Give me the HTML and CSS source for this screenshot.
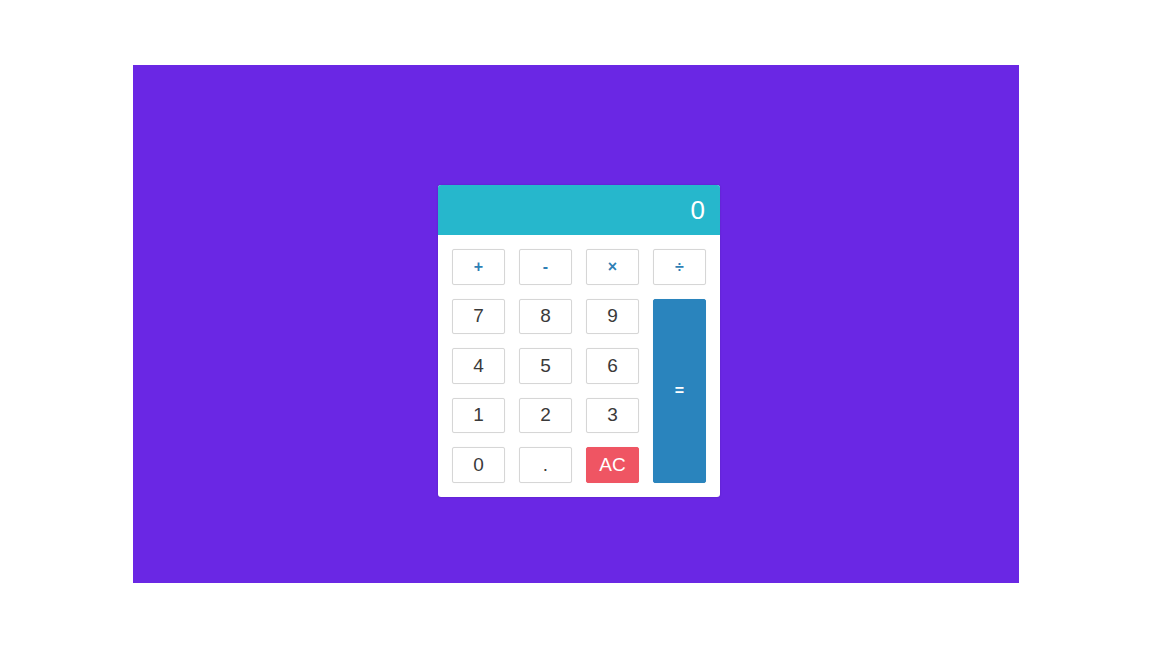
FILE: index.html
```html
<!DOCTYPE html>
<html>
<head>
<meta charset="utf-8">
<link rel="stylesheet" href="styles.css">
</head>
<body>
<div class="page">
  <div class="stage">
    <div class="calc">
      <div class="display">0</div>
      <div class="keys">
        <button class="key op">+</button>
        <button class="key op">-</button>
        <button class="key op">×</button>
        <button class="key op">÷</button>
        <button class="key">7</button>
        <button class="key">8</button>
        <button class="key">9</button>
        <button class="key equals">=</button>
        <button class="key">4</button>
        <button class="key">5</button>
        <button class="key">6</button>
        <button class="key">1</button>
        <button class="key">2</button>
        <button class="key">3</button>
        <button class="key">0</button>
        <button class="key">.</button>
        <button class="key clear">AC</button>
      </div>
    </div>
  </div>
</div>
</body>
</html>
```
FILE: styles.css
```css
html, body {
  margin: 0;
  padding: 0;
  background: #ffffff;
  font-family: "Liberation Sans", Arial, sans-serif;
}
.page {
  width: 1152px;
  height: 648px;
  display: flex;
  align-items: center;
  justify-content: center;
}
.stage {
  width: 886px;
  height: 518px;
  background: #6a27e4;
  box-sizing: border-box;
  padding: 120px 0 0 305px;
}
.calc {
  width: 282px;
  background: #ffffff;
  border-radius: 3px;
  overflow: hidden;
  box-shadow: 0 0 2px rgba(0,0,0,0.2);
}
.display {
  height: 50px;
  background: #26b7cc;
  color: #ffffff;
  font-size: 26px;
  line-height: 50px;
  text-align: right;
  padding-right: 15px;
}
.keys {
  display: grid;
  grid-template-columns: repeat(4, 53px);
  grid-template-rows: repeat(5, 35.5px);
  column-gap: 14px;
  row-gap: 14px;
  padding: 14px;
}
.key {
  margin: 0;
  padding: 0;
  font-family: "Liberation Sans", Arial, sans-serif;
  font-size: 19px;
  color: #3a3a3a;
  background: #ffffff;
  border: 1px solid #d6d6d6;
  border-radius: 2px;
  box-shadow: 0 0 1px rgba(0,0,0,0.08);
}
.op {
  color: #2f7fb5;
  font-size: 16px;
  font-weight: bold;
}
.equals {
  grid-column: 4;
  grid-row: 2 / span 4;
  background: #2a84bd;
  border-color: #2a84bd;
  color: #ffffff;
  font-size: 16px;
  font-weight: bold;
}
.clear {
  background: #ef5563;
  border-color: #ef5563;
  color: #ffffff;
}
```
